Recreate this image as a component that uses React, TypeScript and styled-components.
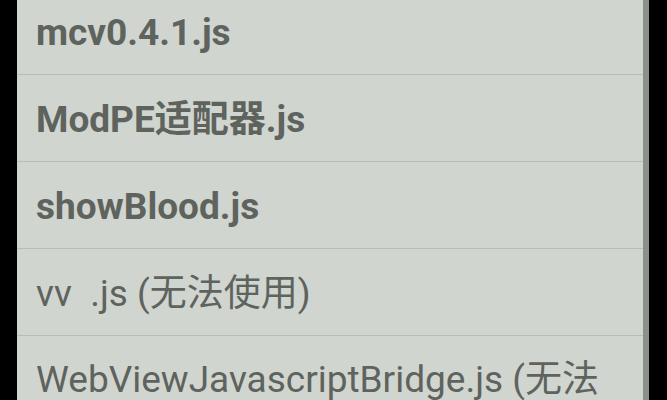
import React from 'react';
import styled, { createGlobalStyle } from 'styled-components';

const GlobalStyle = createGlobalStyle`
  html, body {
    margin: 0;
    padding: 0;
    background: #000;
    overflow: hidden;
  }
`;

const Screen = styled.div`
  width: 667px;
  height: 400px;
  display: flex;
  background: #000;
  overflow: hidden;
`;

const Panel = styled.div`
  margin-left: 17px;
  width: 626px;
  height: 100%;
  background: #d1d5cf;
  border-right: 6px solid #8c908b;
  overflow: hidden;
`;

const List = styled.ul`
  list-style: none;
  margin: -12px 0 0;
  padding: 0;
`;

const Row = styled.li<{ $bold?: boolean }>`
  min-height: 87px;
  box-sizing: border-box;
  display: flex;
  align-items: center;
  padding: 22px 40px 18px 19px;
  border-bottom: 1px solid #b9bdb7;
  font-family: Roboto, "Noto Sans CJK SC", sans-serif;
  font-size: 37px;
  line-height: 1.2;
  font-weight: ${(p) => (p.$bold ? 700 : 400)};
  color: #5e635e;
`;

const files = [
  { name: 'mcv0.4.1.js', ok: true },
  { name: 'ModPE适配器.js', ok: true },
  { name: 'showBlood.js', ok: true },
  { name: 'vv\u00a0\u00a0.js (无法使用)', ok: false },
  { name: 'WebViewJavascriptBridge.js (无法使用)', ok: false },
];

export default function App() {
  return (
    <>
      <GlobalStyle />
      <Screen>
        <Panel>
          <List>
            {files.map((f) => (
              <Row key={f.name} $bold={f.ok}>
                {f.name}
              </Row>
            ))}
          </List>
        </Panel>
      </Screen>
    </>
  );
}
